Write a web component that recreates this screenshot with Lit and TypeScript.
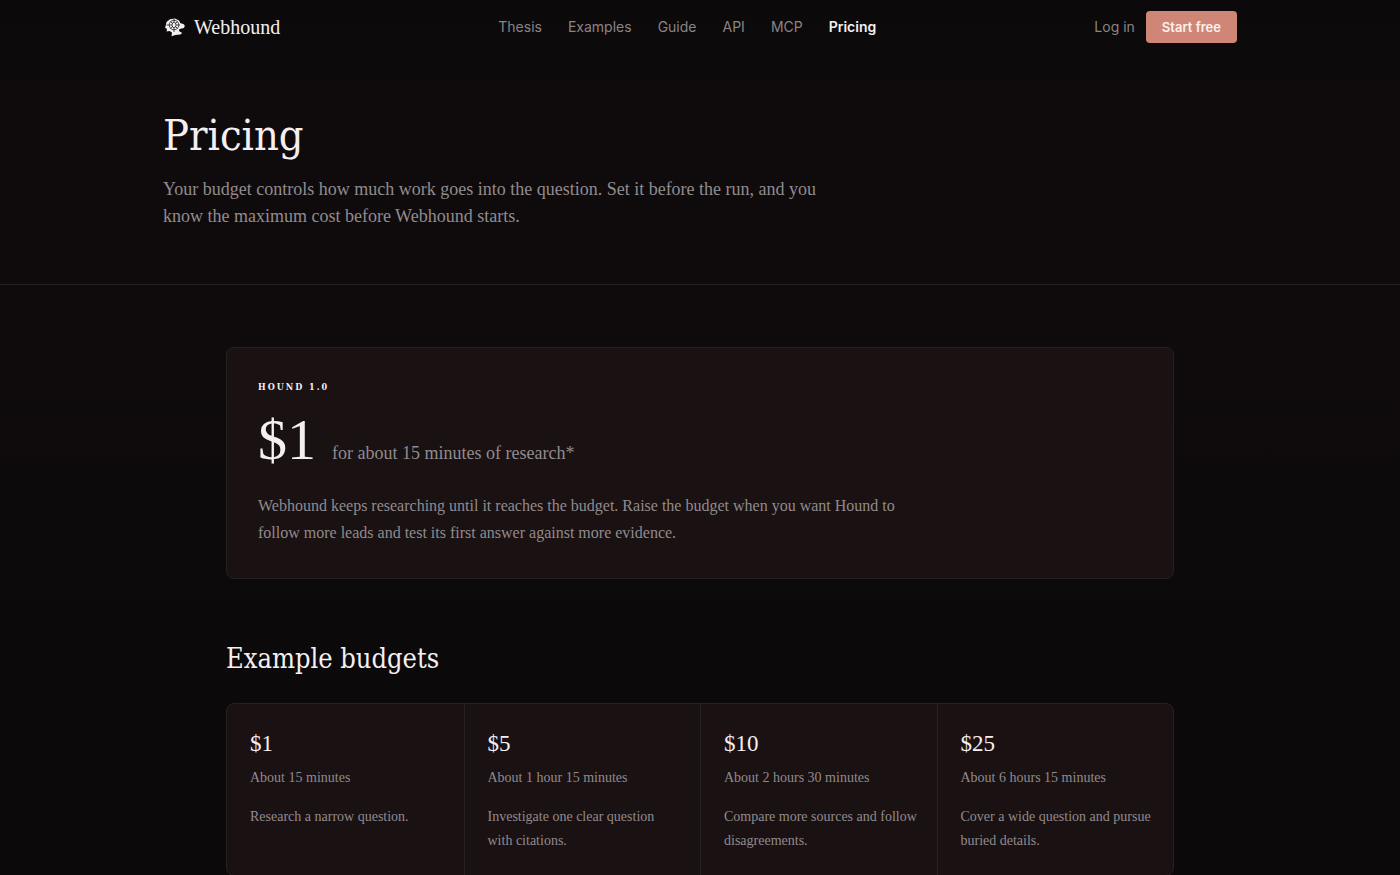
import { LitElement, html, css } from "lit";
import { customElement } from "lit/decorators.js";

const LINKS = ["Thesis", "Examples", "Guide", "API", "MCP", "Pricing"];

const BUDGETS = [
  { price: "$1", time: "About 15 minutes", text: "Research a narrow question." },
  { price: "$5", time: "About 1 hour 15 minutes", text: "Investigate one clear question with citations." },
  { price: "$10", time: "About 2 hours 30 minutes", text: "Compare more sources and follow disagreements." },
  { price: "$25", time: "About 6 hours 15 minutes", text: "Cover a wide question and pursue buried details." },
];

@customElement("app-root")
export class AppRoot extends LitElement {
  static styles = css`
    :host {
      display: block;
      height: 100vh;
      overflow: hidden;
      background: linear-gradient(#0b090a, #0f0b0d 12%, #0f0b0d 45%, #0b090a 75%);
      color: #f4eff0;
      font-family: "Liberation Serif", serif;
    }
    * { box-sizing: border-box; }
    h1, h2, h3, p, ul { margin: 0; padding: 0; font-weight: 400; }
    a { color: inherit; text-decoration: none; }
    .wrap { max-width: 1122px; margin: 0 auto; padding: 0 24px; }
    .nav {
      display: flex;
      justify-content: space-between;
      align-items: center;
      height: 54px;
      font: 14px/20px Inter, sans-serif;
      color: #898586;
    }
    .brand {
      display: flex;
      align-items: center;
      gap: 8px;
      font: 20px/24px "Liberation Serif", serif;
      color: #f4eff0;
    }
    .logo { width: 23px; height: 20px; }
    .links { display: flex; gap: 26px; list-style: none; }
    .current { color: #f4eff0; font-weight: 600; }
    .account { display: flex; justify-content: flex-end; align-items: center; gap: 11px; }
    .start {
      height: 32px;
      padding: 0 16px;
      border: 0;
      border-radius: 4px;
      background: #cf8676;
      color: #fbf1ee;
      font: 600 13px/20px Inter, sans-serif;
    }
    .hero { padding-top: 53px; padding-bottom: 54px; border-bottom: 1px solid #252223; }
    .title { font: 43px/56px "DejaVu Serif Condensed", "DejaVu Serif", serif; }
    .lead {
      max-width: 660px;
      margin-top: 13px;
      font-size: 18px;
      line-height: 27px;
      color: #918b8d;
    }
    .content { max-width: 996px; margin: 0 auto; padding: 62px 24px 0; }
    .card {
      padding: 31px 31px 32px;
      border: 1px solid #252122;
      border-radius: 8px;
      background: #1a1113;
    }
    .model {
      font: bold 9px/16px "DejaVu Serif Condensed", "DejaVu Serif", serif;
      letter-spacing: 2px;
      text-transform: uppercase;
    }
    .rate { display: flex; align-items: baseline; gap: 16px; margin-top: 12px; }
    .price { font-size: 58px; line-height: 66px; }
    .per { font-size: 18px; line-height: 27px; color: #918b8d; }
    .about { max-width: 640px; margin-top: 19px; font-size: 16px; line-height: 27px; color: #918b8d; }
    .section { margin-top: 61px; font: 27px/38px "DejaVu Serif Condensed", "DejaVu Serif", serif; }
    .grid {
      display: grid;
      grid-template-columns: repeat(4, 1fr);
      margin-top: 25px;
      border: 1px solid #252122;
      border-radius: 8px;
      background: #1a1113;
      list-style: none;
    }
    .cell { padding: 25px 18px 22px 23px; font-size: 14px; line-height: 24px; color: #918b8d; }
    .cell + .cell { border-left: 1px solid #252122; }
    .amount { font-size: 23px; line-height: 30px; color: #f4eff0; }
    .time { margin-top: 7px; }
    .desc { margin-top: 15px; }
  `;

  render() {
    return html`
      <header>
        <nav class="wrap nav">
          <a class="brand" href="#">
            <svg class="logo" viewBox="0 0 23 20" aria-hidden="true">
              <path fill="#f4eff0" d="M3.500 5 7 2.200 12 1.500l4 2 1.500 2.700L20.500 7l1.300 1.800-.8 2.200-3.500.8-1.700 1 .5 1.500 3 1.700-2 1.600-5 .4-3.800 1.300.500-3.800-2.500-1.500L3.500 14.500l.5-2.500-2-1.500.8-2Z"/>
              <g fill="none" stroke="#0c0a0b" stroke-width=".7">
                <ellipse cx="11" cy="8" rx="2" ry="2.800"/>
                <circle cx="11" cy="8" r="4.800"/>
                <path d="M11 2v3.200M11 10.800V15M3.500 8H9M13 8h4M7.500 4.500 9.500 6.500M14.500 4.500 12.500 6.500M7.500 11.500l2-2M14.500 11.500l-2-2"/>
              </g>
            </svg>
            <span>Webhound</span>
          </a>
          <ul class="links">
            ${LINKS.map((l) => html`<li><a href="#" class=${l === "Pricing" ? "current" : ""}>${l}</a></li>`)}
          </ul>
          <div class="account">
            <a href="#">Log in</a>
            <button class="start" type="button">Start free</button>
          </div>
        </nav>
      </header>
      <main>
        <section class="hero">
          <div class="wrap">
            <h1 class="title">Pricing</h1>
            <p class="lead">Your budget controls how much work goes into the question. Set it before the run, and you know the maximum cost before Webhound starts.</p>
          </div>
        </section>
        <div class="content">
          <section class="card">
            <p class="model">Hound 1.0</p>
            <p class="rate"><span class="price">$1</span><span class="per">for about 15 minutes of research*</span></p>
            <p class="about">Webhound keeps researching until it reaches the budget. Raise the budget when you want Hound to follow more leads and test its first answer against more evidence.</p>
          </section>
          <h2 class="section">Example budgets</h2>
          <ul class="grid">
            ${BUDGETS.map((b) => html`
              <li class="cell">
                <h3 class="amount">${b.price}</h3>
                <p class="time">${b.time}</p>
                <p class="desc">${b.text}</p>
              </li>`)}
          </ul>
        </div>
      </main>
    `;
  }
}
